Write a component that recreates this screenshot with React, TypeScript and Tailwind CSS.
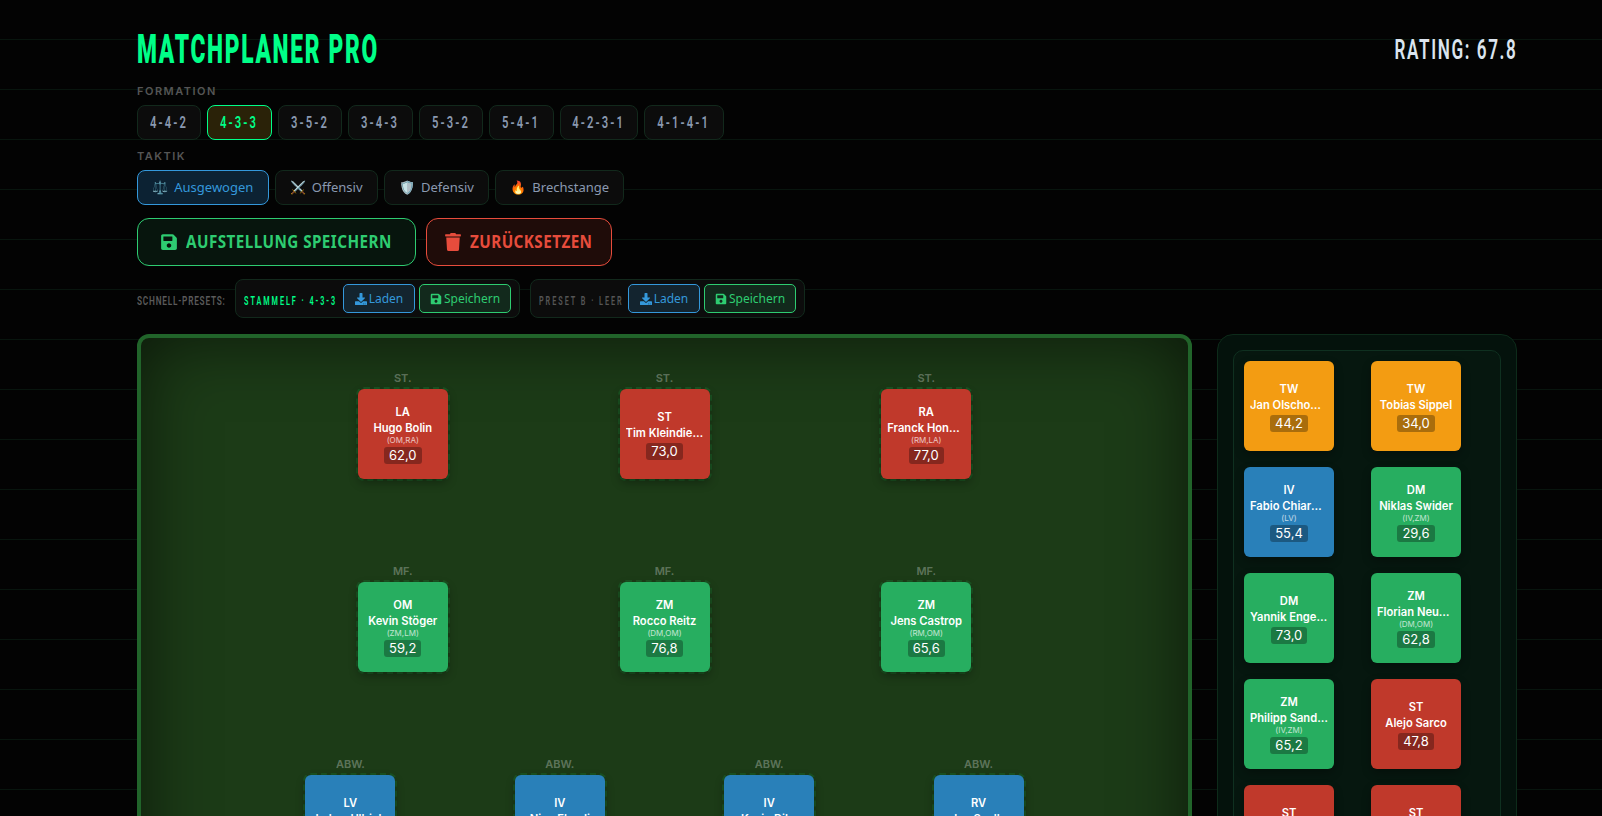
import { FaSave, FaTrash, FaDownload } from 'react-icons/fa';

/* ── data ─────────────────────────────────────────────── */
type Player = { pos: string; name: string; alt?: string; rating: string; color: string };

const RED = 'bg-[#c0392b]';
const GREEN = 'bg-[#27ae60]';
const BLUE = 'bg-[#2980b9]';
const ORANGE = 'bg-[#f39c12]';

const formations = [
  { name: '4-4-2', w: 'w-[64px]' },
  { name: '4-3-3', w: 'w-[64.5px]' },
  { name: '3-5-2', w: 'w-[64.5px]' },
  { name: '3-4-3', w: 'w-[64.5px]' },
  { name: '5-3-2', w: 'w-[64.5px]' },
  { name: '5-4-1', w: 'w-[64.5px]' },
  { name: '4-2-3-1', w: 'w-[78px]' },
  { name: '4-1-4-1', w: 'w-[80px]' },
];
const tactics = [
  { icon: '⚖️', label: 'Ausgewogen' },
  { icon: '⚔️', label: 'Offensiv' },
  { icon: '🛡️', label: 'Defensiv' },
  { icon: '🔥', label: 'Brechstange' },
];

const rows: { label: string; players: Player[] }[] = [
  {
    label: 'ST.',
    players: [
      { pos: 'LA', name: 'Hugo Bolin', alt: '(OM,RA)', rating: '62,0', color: RED },
      { pos: 'ST', name: 'Tim Kleindienst', rating: '73,0', color: RED },
      { pos: 'RA', name: 'Franck Honorat', alt: '(RM,LA)', rating: '77,0', color: RED },
    ],
  },
  {
    label: 'MF.',
    players: [
      { pos: 'OM', name: 'Kevin Stöger', alt: '(ZM,LM)', rating: '59,2', color: GREEN },
      { pos: 'ZM', name: 'Rocco Reitz', alt: '(DM,OM)', rating: '76,8', color: GREEN },
      { pos: 'ZM', name: 'Jens Castrop', alt: '(RM,OM)', rating: '65,6', color: GREEN },
    ],
  },
  {
    label: 'ABW.',
    players: [
      { pos: 'LV', name: 'Lukas Ullrich', rating: '60,0', color: BLUE },
      { pos: 'IV', name: 'Nico Elvedi', rating: '70,0', color: BLUE },
      { pos: 'IV', name: 'Kevin Diks', rating: '72,0', color: BLUE },
      { pos: 'RV', name: 'Joe Scally', rating: '68,0', color: BLUE },
    ],
  },
];

const bench: Player[] = [
  { pos: 'TW', name: 'Jan Olschowsky', rating: '44,2', color: ORANGE },
  { pos: 'TW', name: 'Tobias Sippel', rating: '34,0', color: ORANGE },
  { pos: 'IV', name: 'Fabio Chiarodia', alt: '(LV)', rating: '55,4', color: BLUE },
  { pos: 'DM', name: 'Niklas Swider', alt: '(IV,ZM)', rating: '29,6', color: GREEN },
  { pos: 'DM', name: 'Yannik Engelhardt', rating: '73,0', color: GREEN },
  { pos: 'ZM', name: 'Florian Neuhaus', alt: '(DM,OM)', rating: '62,8', color: GREEN },
  { pos: 'ZM', name: 'Philipp Sander', alt: '(IV,ZM)', rating: '65,2', color: GREEN },
  { pos: 'ST', name: 'Alejo Sarco', rating: '47,8', color: RED },
  { pos: 'ST', name: 'Shio Fukuda', rating: '40,0', color: RED },
  { pos: 'ST', name: 'Grant Ranos', rating: '45,0', color: RED },
];

// no Bebas here, so Roboto gets squeezed sideways
const narrow = "font-['Roboto',sans-serif] inline-block whitespace-nowrap";
const inter = "font-['Inter',sans-serif]";
const noto = "font-['Noto_Sans',sans-serif]";

/* ── card ─────────────────────────────────────────────── */
function PlayerCard({ p }: { p: Player }) {
  return (
    <div className={`${p.color} ${inter} flex h-[90px] w-[90px] flex-col items-center justify-center rounded-md px-1.5 pt-[2px] text-white shadow-[0_4px_10px_rgba(0,0,0,0.3)]`}>
      <span className="text-[11.2px] font-semibold leading-[13px]">{p.pos}</span>
      <span className="mt-[2px] w-full truncate text-center text-[11.2px] font-semibold leading-[15px]">{p.name}</span>
      {p.alt && <span className="text-[8px] leading-[9px] opacity-70">{p.alt}</span>}
      <span className="mt-[2px] rounded-[3px] bg-black/30 px-[5px] text-[13px] leading-[17px]">{p.rating}</span>
    </div>
  );
}

function PresetButtons() {
  return (
    <div className={`${noto} flex shrink-0 gap-1 text-[12px]`}>
      <button className="flex h-[29px] w-[72px] items-center justify-center gap-0.5 rounded-[5px] border border-[#3498db] bg-[#13242f] text-[#3498db]">
        <FaDownload className="size-3" /> Laden
      </button>
      <button className="flex h-[29px] w-[92px] items-center justify-center gap-0.5 rounded-[5px] border border-[#2ecc71] bg-[#12291c] text-[#2ecc71]">
        <FaSave className="size-3" /> Speichern
      </button>
    </div>
  );
}

/* ── page ─────────────────────────────────────────────── */
export default function App() {
  return (
    <div className="h-screen overflow-hidden bg-[#030303] bg-[repeating-linear-gradient(180deg,transparent_0px,transparent_49px,#08150e_49px,#08150e_50px)] bg-[position:0_-10px] pl-[137px] pt-[30px]">
      <div className="w-[1380px]">
        <header className="flex items-center justify-between">
          <h1 className={`${narrow} origin-left scale-x-[0.568] text-[40px] font-black leading-[40px] tracking-[3px] text-[#00ff88]`}>MATCHPLANER PRO</h1>
          <span className={`${narrow} origin-right scale-x-[0.635] text-[27px] font-semibold leading-[40px] tracking-[2.5px] text-[#dbe4ef]`}>RATING: 67.8</span>
        </header>

        <div className={`${inter} mt-[14px] text-[11px] font-semibold leading-[14px] tracking-[1.5px] text-[#555]`}>FORMATION</div>
        <div className="mt-[7px] flex gap-1.5">
          {formations.map(f => (
            <button
              key={f.name}
              className={`h-[35px] rounded-lg border ${f.w} ${f.name === '4-3-3' ? 'border-[#00ff88] bg-[#2a2208] text-[#00ff88]' : 'border-[#12291c] bg-[#0c0c0c] text-[#8a99b0]'}`}
            >
              <span className={`${narrow} scale-x-[0.7] text-[16px] font-semibold tracking-[3px]`}>{f.name}</span>
            </button>
          ))}
        </div>

        <div className={`${inter} mt-[9px] text-[11px] font-semibold leading-[14px] tracking-[1.5px] text-[#555]`}>TAKTIK</div>
        <div className="mt-[7px] flex gap-1.5">
          {tactics.map((t, i) => (
            <button
              key={t.label}
              className={`${noto} flex h-[35px] items-center gap-1.5 rounded-lg border px-[14.25px] text-[13px] ${i === 0 ? 'border-[#3498db] bg-[#0c2233] text-[#3498db]' : 'border-[#12291c] bg-[#0c0c0c] text-[#8a99b0]'}`}
            >
              <span>{t.icon}</span>
              {t.label}
            </button>
          ))}
        </div>

        <div className="mt-[13px] flex gap-2.5">
          <button className={`${noto} flex h-[48px] w-[279px] items-center gap-2 rounded-xl border border-[#2ecc71] bg-[#07150d] pl-[21.5px] text-[17px] font-bold text-[#2ecc71]`}>
            <FaSave className="size-[18px] shrink-0" />
            <span className="inline-block origin-left scale-x-[0.895] whitespace-nowrap tracking-[0.5px]">AUFSTELLUNG SPEICHERN</span>
          </button>
          <button className={`${noto} flex h-[48px] w-[186px] items-center gap-2 rounded-xl border border-[#e74c3c] bg-[#1f0c09] pl-[17px] text-[17px] font-bold text-[#e74c3c]`}>
            <FaTrash className="size-[18px] shrink-0" />
            <span className="inline-block origin-left scale-x-[0.895] whitespace-nowrap tracking-[0.5px]">ZURÜCKSETZEN</span>
          </button>
        </div>

        <div className="mt-[13px] flex items-center gap-2.5">
          <span className="w-[88px]">
            <span className={`${narrow} origin-left scale-x-[0.66] text-[12.5px] font-semibold tracking-[1.2px] text-[#5a5a5a]`}>SCHNELL-PRESETS:</span>
          </span>
          <div className="flex h-[39px] w-[285px] items-center justify-between rounded-lg border border-[#12291c] bg-[#0c0c0c] px-[8px]">
            <span className="w-[90px]">
              <span className={`${narrow} origin-left scale-x-[0.58] text-[12.5px] font-semibold tracking-[3.4px] text-[#00ff88]`}>STAMMELF · 4-3-3</span>
            </span>
            <PresetButtons />
          </div>
          <div className="flex h-[39px] w-[275px] items-center justify-between rounded-lg border border-[#12291c] bg-[#0c0c0c] px-[8px]">
            <span className="w-[85px]">
              <span className={`${narrow} origin-left scale-x-[0.58] text-[12.5px] font-semibold tracking-[3.4px] text-[#555]`}>PRESET B · LEER</span>
            </span>
            <PresetButtons />
          </div>
        </div>

        <div className="mt-[16px] flex gap-[25px]">
          <section className="flex h-[600px] w-[1055px] flex-col gap-[83px] rounded-xl border-4 border-[#21642a] bg-[#1c3b17] px-[45px] pt-[33px] shadow-[inset_0_0_70px_rgba(0,0,0,0.6)]">
            {rows.map(row => (
              <div key={row.label} className="flex justify-evenly">
                {row.players.map((p, i) => (
                  <div key={i} className="flex w-[90px] flex-col items-center">
                    <span className={`${inter} mb-[2px] text-[11px] font-semibold leading-[14px] text-white/30`}>{row.label}</span>
                    <div className="rounded-lg border-2 border-dashed border-[#1a5221]">
                      <PlayerCard p={p} />
                    </div>
                  </div>
                ))}
              </div>
            ))}
          </section>

          <aside className="h-[600px] w-[300px] rounded-2xl border border-[#0d2b1a] bg-[#04120c] p-[15px]">
            <div className="grid grid-cols-[90px_90px] gap-x-[37px] gap-y-4 rounded-[10px] border border-[#0f3020] bg-[#06170f] p-[10px]">
              {bench.map((p, i) => (
                <PlayerCard key={i} p={p} />
              ))}
            </div>
          </aside>
        </div>
      </div>
    </div>
  );
}
